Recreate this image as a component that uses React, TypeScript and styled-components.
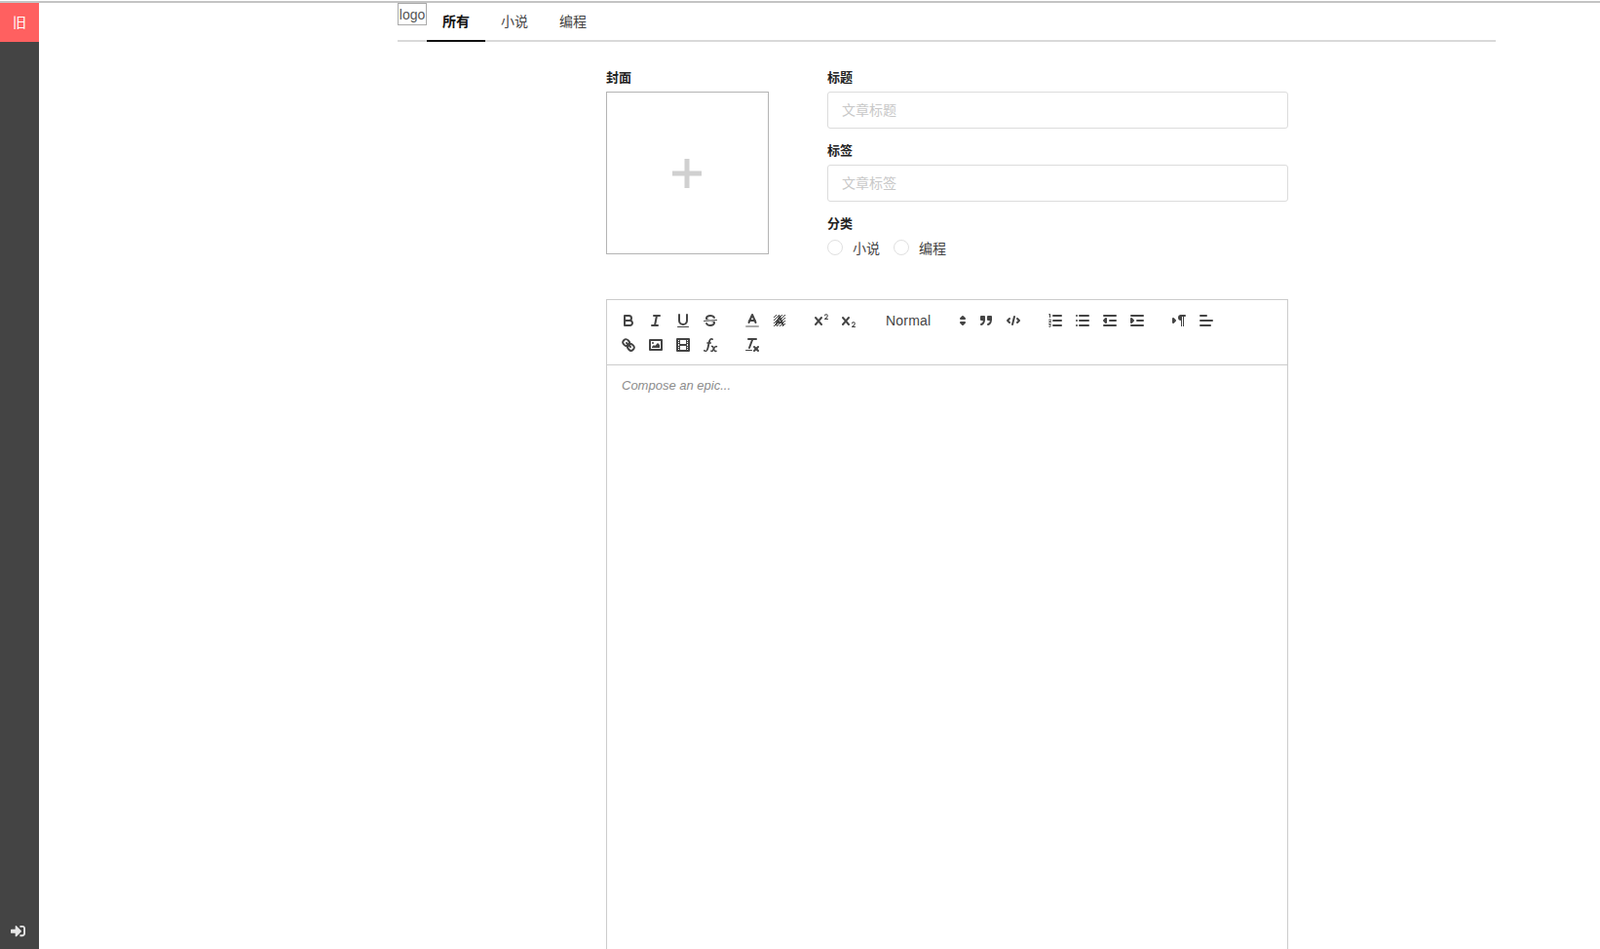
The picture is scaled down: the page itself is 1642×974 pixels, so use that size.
import React from 'react';
import styled, { createGlobalStyle } from 'styled-components';
import { FaSignInAlt } from 'react-icons/fa';

const GlobalStyle = createGlobalStyle`
  html, body {
    margin: 0;
    padding: 0;
    height: 100%;
    overflow: hidden;
    background: #fff;
  }
  body {
    font-family: "Liberation Sans", "Noto Sans CJK SC", sans-serif;
    color: #222;
    padding-top: 1px;
    box-sizing: border-box;
  }
`;

const Page = styled.div`
  display: flex;
  height: 973px;
  box-sizing: border-box;
  border-top: 2px solid #c4c4c4;
  overflow: hidden;
`;

const Sidebar = styled.aside`
  flex: 0 0 40px;
  display: flex;
  flex-direction: column;
  justify-content: space-between;
  background: #444;
`;

const SideBadge = styled.div`
  height: 40px;
  box-sizing: border-box;
  display: flex;
  align-items: center;
  justify-content: center;
  padding-bottom: 2px;
  background: #ff6060;
  color: #fff;
  font-size: 14px;
`;

const SideFooter = styled.div`
  height: 26px;
  display: flex;
  justify-content: center;
  padding-right: 4px;
  color: #e6e6e6;
  font-size: 15px;
`;

const Main = styled.main`
  flex: 1;
  padding-left: 368px;
  min-width: 0;
`;

const Header = styled.header`
  width: 1127px;
  height: 40px;
  box-sizing: border-box;
  display: flex;
  border-bottom: 2px solid #d9d9d9;
`;

const Logo = styled.div`
  width: 30px;
  height: 23px;
  box-sizing: border-box;
  border: 1px solid #aaa;
  font-size: 14px;
  line-height: 23px;
  text-align: center;
  color: #555;
`;

const Tab = styled.a<{ $active?: boolean }>`
  width: 60px;
  height: 40px;
  box-sizing: border-box;
  display: flex;
  align-items: center;
  justify-content: center;
  padding-bottom: 3px;
  font-size: 14px;
  font-weight: ${(p) => (p.$active ? 700 : 400)};
  color: ${(p) => (p.$active ? '#111' : '#444')};
  border-bottom: 2px solid ${(p) => (p.$active ? '#111' : 'transparent')};
`;

const Form = styled.form`
  width: 700px;
  margin: 29px 0 0 214px;
`;

const TopRow = styled.div`
  display: flex;
  gap: 60px;
`;

const FieldLabel = styled.label`
  display: block;
  height: 22px;
  font-size: 13px;
  font-weight: 700;
  line-height: 16px;
  color: #222;
`;

const CoverColumn = styled.div`
  flex: 0 0 167px;
`;

const CoverBox = styled.div`
  width: 167px;
  height: 167px;
  box-sizing: border-box;
  display: flex;
  align-items: center;
  justify-content: center;
  padding: 1px 1px 0 0;
  border: 1px solid #b4b4b4;
`;

const FieldsColumn = styled.div`
  flex: 1;
  display: flex;
  flex-direction: column;
`;

const Field = styled.div`
  margin-bottom: 15px;
`;

const TextInput = styled.input`
  display: block;
  width: 100%;
  height: 38px;
  box-sizing: border-box;
  padding: 0 14px;
  border: 1px solid #dcdcdc;
  border-radius: 3px;
  outline: none;
  font-family: inherit;
  font-size: 14px;
  &::placeholder {
    color: #c8c8c8;
    opacity: 1;
  }
`;

const RadioRow = styled.div`
  display: flex;
  align-items: center;
  height: 20px;
`;

const RadioItem = styled.label`
  display: flex;
  align-items: center;
  gap: 10px;
  margin-right: 14px;
  font-size: 14px;
  color: #444;
`;

const RadioDot = styled.span`
  width: 16px;
  height: 16px;
  box-sizing: border-box;
  border: 1px solid #e0e0e0;
  border-radius: 50%;
`;

const Editor = styled.section`
  margin-top: 43px;
  height: 700px;
  box-sizing: border-box;
  border: 1px solid #ccc;
`;

const Toolbar = styled.div`
  display: flex;
  flex-wrap: wrap;
  row-gap: 1px;
  padding: 9px 8px 8px;
  border-bottom: 1px solid #ccc;
`;

const FormatGroup = styled.span`
  display: flex;
  margin-right: 15px;
`;

const ToolButton = styled.button`
  width: 28px;
  height: 24px;
  padding: 3px 5px;
  border: 0;
  background: none;
  display: block;
  svg {
    display: block;
    width: 18px;
    height: 18px;
    fill: none;
    stroke: #444;
    stroke-width: 2;
    stroke-linecap: round;
    stroke-linejoin: round;
  }
  .fill {
    fill: #444;
    stroke: none;
  }
  .both {
    fill: #444;
  }
  .thin {
    stroke-width: 1;
  }
`;

const HeaderPicker = styled.span`
  width: 98px;
  height: 24px;
  box-sizing: border-box;
  display: flex;
  align-items: center;
  justify-content: space-between;
  padding: 0 1px 0 9px;
  font-size: 14px;
  letter-spacing: 0.2px;
  color: #444;
  svg {
    width: 18px;
    height: 18px;
    fill: #444;
    stroke: #444;
    stroke-width: 2;
    stroke-linejoin: round;
  }
`;

const EditorBody = styled.div`
  padding: 11px 15px;
  font-size: 13px;
  line-height: 19.5px;
  font-style: italic;
  color: #8c8c8c;
`;

const PlusIcon = () => (
  <svg width="30" height="30" viewBox="0 0 30 30">
    <path d="M12.5 0h5v12.5H30v5H17.5V30h-5V17.5H0v-5h12.5z" fill="#d0d0d0" />
  </svg>
);

const Icon = ({ children }: { children: React.ReactNode }) => (
  <ToolButton type="button">
    <svg viewBox="0 0 18 18">{children}</svg>
  </ToolButton>
);

const XMark =
  'M9.65,5.241a1,1,0,0,0-1.409.108L6,7.964,3.759,5.349A1,1,0,0,0,2.192,6.59178Q2.21541,6.6213,2.241,6.649L4.684,9.5,2.241,12.35A1,1,0,0,0,3.71,13.70722q0.02557-.02768.049-0.05722L6,11.036,8.241,13.65a1,1,0,1,0,1.567-1.24277Q9.78459,12.3777,9.759,12.35L7.316,9.5,9.759,6.651A1,1,0,0,0,9.65,5.241Z';

export default function App() {
  return (
    <>
      <GlobalStyle />
      <Page>
        <Sidebar>
          <SideBadge>旧</SideBadge>
          <SideFooter>
            <FaSignInAlt />
          </SideFooter>
        </Sidebar>
        <Main>
          <Header>
            <Logo>logo</Logo>
            <Tab $active>所有</Tab>
            <Tab>小说</Tab>
            <Tab>编程</Tab>
          </Header>
          <Form>
            <TopRow>
              <CoverColumn>
                <FieldLabel>封面</FieldLabel>
                <CoverBox>
                  <PlusIcon />
                </CoverBox>
              </CoverColumn>
              <FieldsColumn>
                <Field>
                  <FieldLabel>标题</FieldLabel>
                  <TextInput placeholder="文章标题" />
                </Field>
                <Field>
                  <FieldLabel>标签</FieldLabel>
                  <TextInput placeholder="文章标签" />
                </Field>
                <FieldLabel>分类</FieldLabel>
                <RadioRow>
                  <RadioItem>
                    <RadioDot />
                    小说
                  </RadioItem>
                  <RadioItem>
                    <RadioDot />
                    编程
                  </RadioItem>
                </RadioRow>
              </FieldsColumn>
            </TopRow>
            <Editor>
              <Toolbar>
                <FormatGroup>
                  <Icon>
                    <path d="M5,4H9.5A2.5,2.5,0,0,1,12,6.5v0A2.5,2.5,0,0,1,9.5,9H5V4Z" />
                    <path d="M5,9h5.5A2.5,2.5,0,0,1,13,11.5v0A2.5,2.5,0,0,1,10.5,14H5V9Z" />
                  </Icon>
                  <Icon>
                    <line x1="7" x2="13" y1="4" y2="4" />
                    <line x1="5" x2="11" y1="14" y2="14" />
                    <line x1="8" x2="10" y1="14" y2="4" />
                  </Icon>
                  <Icon>
                    <path d="M5,3V9a4.012,4.012,0,0,0,4,4H9a3.97,3.97,0,0,0,4-4V3" />
                    <rect className="fill" height="1" rx=".5" ry=".5" width="12" x="3" y="15" />
                  </Icon>
                  <Icon>
                    <line className="thin" x1="15.5" x2="2.5" y1="8.5" y2="9.5" />
                    <path className="fill" d="M9.007,8C6.542,7.791,6,7.519,6,6.5,6,5.792,7.283,5,9,5c1.571,0,2.765.679,2.969,1.309a1,1,0,0,0,1.9-.617C13.356,4.106,11.354,3,9,3,6.2,3,4,4.538,4,6.5a3.2,3.2,0,0,0,.5,1.843Z" />
                    <path className="fill" d="M8.984,10C11.457,10.208,12,10.479,12,11.5c0,.708-1.283,1.5-3,1.5-1.571,0-2.765-.679-2.969-1.309a1,1,0,1,0-1.9.617C4.644,13.894,6.646,15,9,15c2.8,0,5-1.538,5-3.5a3.2,3.2,0,0,0-.5-1.843Z" />
                  </Icon>
                </FormatGroup>
                <FormatGroup>
                  <Icon>
                    <line x1="3" x2="15" y1="15" y2="15" stroke="#aaa" />
                    <polyline points="5.5 11 9 3 12.5 11" />
                    <line x1="11.63" x2="6.38" y1="9" y2="9" />
                  </Icon>
                  <Icon>
                    <defs>
                      <pattern id="hatch" width="3" height="3" patternUnits="userSpaceOnUse">
                        <rect x="0" y="2" width="1" height="1" fill="#444" stroke="none" />
                        <rect x="1" y="1" width="1" height="1" fill="#444" stroke="none" />
                        <rect x="2" y="0" width="1" height="1" fill="#444" stroke="none" />
                      </pattern>
                    </defs>
                    <rect x="3" y="3" width="12" height="12" fill="url(#hatch)" stroke="none" />
                    <polyline points="5.5 13 9 5 12.5 13" />
                    <line x1="11.63" x2="6.38" y1="11" y2="11" />
                  </Icon>
                </FormatGroup>
                <FormatGroup>
                  <Icon>
                    <path className="fill" d="M15.5,7H13.861a4.015,4.015,0,0,0,1.914-2.975,1.8,1.8,0,0,0-1.6-1.751A1.922,1.922,0,0,0,12.021,3.7a0.5,0.5,0,1,0,.957.291,0.917,0.917,0,0,1,1.053-.725,0.81,0.81,0,0,1,.744.762c0,1.077-1.164,1.925-1.934,2.486A1.423,1.423,0,0,0,12,7.5a0.5,0.5,0,0,0,.5.5h3A0.5,0.5,0,0,0,15.5,7Z" />
                    <path className="fill" d={XMark} />
                  </Icon>
                  <Icon>
                    <path className="fill" d="M15.5,15H13.861a3.858,3.858,0,0,0,1.914-2.975,1.8,1.8,0,0,0-1.6-1.751A1.921,1.921,0,0,0,12.021,11.7a0.50013,0.50013,0,1,0,.957.291h0a0.914,0.914,0,0,1,1.053-.725,0.81,0.81,0,0,1,.744.762c0,1.076-1.16971,1.86982-1.93971,2.43082A1.45639,1.45639,0,0,0,12,15.5a0.5,0.5,0,0,0,.5.5h3A0.5,0.5,0,0,0,15.5,15Z" />
                    <path className="fill" d={XMark} />
                  </Icon>
                </FormatGroup>
                <FormatGroup>
                  <HeaderPicker>
                    Normal
                    <svg viewBox="0 0 18 18">
                      <polygon points="7 11 9 13 11 11 7 11" />
                      <polygon points="7 7 9 5 11 7 7 7" />
                    </svg>
                  </HeaderPicker>
                  <Icon>
                    <rect className="both" height="3" width="3" x="4" y="5" />
                    <rect className="both" height="3" width="3" x="11" y="5" />
                    <path d="M7,8c0,4.031-3,5-3,5" />
                    <path d="M14,8c0,4.031-3,5-3,5" />
                  </Icon>
                  <Icon>
                    <polyline points="5 7 3 9 5 11" />
                    <polyline points="13 7 15 9 13 11" />
                    <line x1="10" x2="8" y1="5" y2="13" />
                  </Icon>
                </FormatGroup>
                <FormatGroup>
                  <Icon>
                    <line x1="7" x2="15" y1="4" y2="4" />
                    <line x1="7" x2="15" y1="9" y2="9" />
                    <line x1="7" x2="15" y1="14" y2="14" />
                    <path className="fill" d="M3.5,6A0.5,0.5,0,0,1,3,5.5V3.085l-0.276.138A0.5,0.5,0,0,1,2.053,3c-0.124-.247-0.023-0.324.224-0.447l1-.5A0.5,0.5,0,0,1,4,2.5v3A0.5,0.5,0,0,1,3.5,6Z" />
                    <path className="thin" d="M2.5,8.2C3,7.6,4.5,7.6,4.5,8.6S2.5,10,2.5,10.5h2" />
                    <path className="thin" d="M2.5,12.6h2l-1,1.2c1,0,1,1.7-.2,1.7-.4,0-.8-.2-.8-.4" />
                  </Icon>
                  <Icon>
                    <line x1="6" x2="15" y1="4" y2="4" />
                    <line x1="6" x2="15" y1="9" y2="9" />
                    <line x1="6" x2="15" y1="14" y2="14" />
                    <line x1="3" x2="3" y1="4" y2="4" />
                    <line x1="3" x2="3" y1="9" y2="9" />
                    <line x1="3" x2="3" y1="14" y2="14" />
                  </Icon>
                  <Icon>
                    <line x1="3" x2="15" y1="14" y2="14" />
                    <line x1="3" x2="15" y1="4" y2="4" />
                    <line x1="9" x2="15" y1="9" y2="9" />
                    <polyline className="both" points="5 7 5 11 3 9 5 7" />
                  </Icon>
                  <Icon>
                    <line x1="3" x2="15" y1="14" y2="14" />
                    <line x1="3" x2="15" y1="4" y2="4" />
                    <line x1="9" x2="15" y1="9" y2="9" />
                    <polyline className="both" points="3 7 3 11 5 9 3 7" />
                  </Icon>
                </FormatGroup>
                <FormatGroup>
                  <Icon>
                    <polygon className="both" points="3 11 5 9 3 7 3 11" />
                    <line x1="15" x2="11" y1="4" y2="4" />
                    <path className="fill" d="M11,3a3,3,0,0,0,0,6h1V3H11Z" />
                    <rect className="fill" height="11" width="1" x="11" y="4" />
                    <rect className="fill" height="11" width="1" x="13" y="4" />
                  </Icon>
                  <Icon>
                    <line x1="3" x2="15" y1="9" y2="9" />
                    <line x1="3" x2="13" y1="14" y2="14" />
                    <line x1="3" x2="9" y1="4" y2="4" />
                  </Icon>
                </FormatGroup>
                <FormatGroup>
                  <Icon>
                    <line x1="7" x2="11" y1="7" y2="11" />
                    <path d="M8.9,4.577a3.476,3.476,0,0,1,.36,4.679A3.476,3.476,0,0,1,4.577,8.9C3.185,7.5,2.035,6.4,4.217,4.217S7.5,3.185,8.9,4.577Z" />
                    <path d="M13.423,9.1a3.476,3.476,0,0,0-4.679-.36,3.476,3.476,0,0,0,.36,4.679c1.392,1.392,2.5,2.542,4.679.36S14.815,10.5,13.423,9.1Z" />
                  </Icon>
                  <Icon>
                    <rect height="10" width="12" x="3" y="4" />
                    <circle className="fill" cx="6" cy="7" r="1" />
                    <polyline className="fill" points="5 12 5 11 7 9 8 10 11 7 13 9 13 12 5 12" />
                  </Icon>
                  <Icon>
                    <rect height="12" width="12" x="3" y="3" />
                    <rect className="fill" height="12" width="1" x="5" y="3" />
                    <rect className="fill" height="12" width="1" x="12" y="3" />
                    <rect className="fill" height="2" width="8" x="5" y="8" />
                    <rect className="fill" height="1" width="3" x="3" y="5" />
                    <rect className="fill" height="1" width="3" x="3" y="7" />
                    <rect className="fill" height="1" width="3" x="3" y="10" />
                    <rect className="fill" height="1" width="3" x="3" y="12" />
                    <rect className="fill" height="1" width="3" x="12" y="5" />
                    <rect className="fill" height="1" width="3" x="12" y="7" />
                    <rect className="fill" height="1" width="3" x="12" y="10" />
                    <rect className="fill" height="1" width="3" x="12" y="12" />
                  </Icon>
                  <Icon>
                    <path className="fill" d="M11.759,2.482a2.561,2.561,0,0,0-3.53.607A7.656,7.656,0,0,0,6.8,6.2C6.109,9.188,5.275,14.677,4.15,14.927a1.545,1.545,0,0,0-1.3-.933A0.922,0.922,0,0,0,2,15.036S1.954,16,4.119,16s3.091-2.691,3.7-5.553c0.177-.826.36-1.726,0.554-2.6L8.775,6.2c0.381-1.421.807-2.521,1.306-2.676a1.014,1.014,0,0,0,1.02.56A0.966,0.966,0,0,0,11.759,2.482Z" />
                    <rect className="fill" height="1.6" rx=".8" ry=".8" width="5" x="5.15" y="6.2" />
                    <path strokeWidth="1.5" d="M10.5,10.4C11.5,10.2,12,11,12.5,13C13,15,13.5,15.8,15,15.2" />
                    <path strokeWidth="1.5" d="M15.5,10.6C14,10,13.5,11,12.5,12.8C11.5,14.6,11,16,9.8,15.2" />
                  </Icon>
                </FormatGroup>
                <FormatGroup>
                  <Icon>
                    <line x1="5" x2="13" y1="3" y2="3" />
                    <line x1="6" x2="9.35" y1="12" y2="3" />
                    <line x1="11" x2="15" y1="11" y2="15" />
                    <line x1="15" x2="11" y1="11" y2="15" />
                    <rect className="fill" height="1" rx=".5" ry=".5" width="7" x="2" y="14" />
                  </Icon>
                </FormatGroup>
              </Toolbar>
              <EditorBody>Compose an epic...</EditorBody>
            </Editor>
          </Form>
        </Main>
      </Page>
    </>
  );
}
